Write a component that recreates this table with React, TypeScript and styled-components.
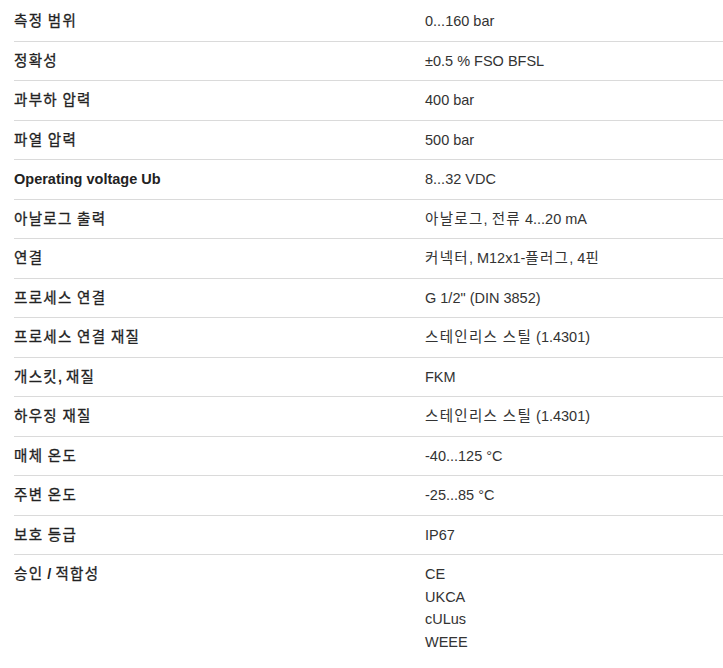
import React from 'react';
import styled, { createGlobalStyle } from 'styled-components';

const GlobalStyle = createGlobalStyle`
  html, body {
    margin: 0;
    padding: 0;
    background: #fff;
  }
  body {
    font-family: "Liberation Sans", Arial, "Noto Sans CJK KR", sans-serif;
    font-size: 14.5px;
    color: #333;
  }
`;

const Page = styled.div`
  padding: 2px 0 0 14px;
`;

const Table = styled.div`
  display: flex;
  flex-direction: column;
`;

const Row = styled.div<{ $last?: boolean }>`
  display: grid;
  grid-template-columns: 411px 1fr;
  padding: 8px 0;
  line-height: 22.5px;
  border-bottom: ${(p) => (p.$last ? 'none' : '1px solid #dadada')};
`;

const Label = styled.div`
  font-weight: bold;
  color: #222;
`;

const Value = styled.div`
  display: flex;
  flex-direction: column;
  color: #333;
`;

// korean runs are wider and a little lighter in the original than the CJK fallback
const Hangul = styled.span<{ $bold?: boolean }>`
  font-family: "Noto Sans CJK KR", sans-serif;
  font-size: 14.5px;
  line-height: 1;
  letter-spacing: 1.3px;
  font-weight: 400;
  -webkit-text-stroke: ${(p) => (p.$bold ? '0.3px currentColor' : '0')};
`;

const hangulRun = /([\uAC00-\uD7A3]+(?:\s+[\uAC00-\uD7A3]+)*)/;

const Text = ({ children, bold }: { children: string; bold?: boolean }) => (
  <>
    {children.split(hangulRun).map((part, i) =>
      i % 2 === 1 ? (
        <Hangul key={i} $bold={bold}>
          {part}
        </Hangul>
      ) : (
        part
      )
    )}
  </>
);

const specs: [string, string[]][] = [
  ['측정 범위', ['0...160 bar']],
  ['정확성', ['±0.5 % FSO BFSL']],
  ['과부하 압력', ['400 bar']],
  ['파열 압력', ['500 bar']],
  ['Operating voltage Ub', ['8...32 VDC']],
  ['아날로그 출력', ['아날로그, 전류 4...20 mA']],
  ['연결', ['커넥터, M12x1-플러그, 4핀']],
  ['프로세스 연결', ['G 1/2" (DIN 3852)']],
  ['프로세스 연결 재질', ['스테인리스 스틸 (1.4301)']],
  ['개스킷, 재질', ['FKM']],
  ['하우징 재질', ['스테인리스 스틸 (1.4301)']],
  ['매체 온도', ['-40...125 °C']],
  ['주변 온도', ['-25...85 °C']],
  ['보호 등급', ['IP67']],
  ['승인 / 적합성', ['CE', 'UKCA', 'cULus', 'WEEE']],
];

const App = () => {
  return (
    <>
      <GlobalStyle />
      <Page>
        <Table>
          {specs.map(([label, values], i) => (
            <Row key={label} $last={i === specs.length - 1}>
              <Label>
                <Text bold>{label}</Text>
              </Label>
              <Value>
                {values.map((v) => (
                  <span key={v}>
                    <Text>{v}</Text>
                  </span>
                ))}
              </Value>
            </Row>
          ))}
        </Table>
      </Page>
    </>
  );
};

export default App;
